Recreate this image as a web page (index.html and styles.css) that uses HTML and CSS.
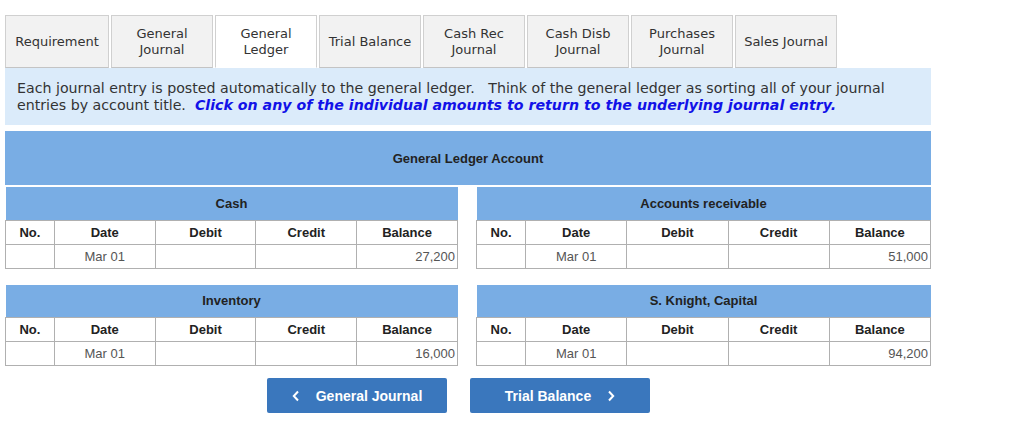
FILE: index.html
```html
<!DOCTYPE html>
<html lang="en">
<head>
    <meta charset="UTF-8">
    <title>General Ledger</title>
    <link rel="stylesheet" href="styles.css">
</head>
<body>
    <div class="page">
        <div class="tabs">
            <div class="tab first">Requirement</div>
            <div class="tab">General<br>Journal</div>
            <div class="tab active">General<br>Ledger</div>
            <div class="tab">Trial Balance</div>
            <div class="tab">Cash Rec<br>Journal</div>
            <div class="tab">Cash Disb<br>Journal</div>
            <div class="tab">Purchases<br>Journal</div>
            <div class="tab">Sales Journal</div>
        </div>

        <div class="info">
            Each journal entry is posted automatically to the general ledger.&nbsp;&nbsp; Think of the general ledger as sorting all of your journal entries by account title.&nbsp;
            <span class="hint">Click on any of the individual amounts to return to the underlying journal entry.</span>
        </div>

        <div class="ledger-title">General Ledger Account</div>

        <div class="accounts">
            <table class="account">
                <tr><th colspan="5" class="acct-name">Cash</th></tr>
                <tr class="cols"><th>No.</th><th>Date</th><th>Debit</th><th>Credit</th><th>Balance</th></tr>
                <tr class="data"><td></td><td class="date">Mar 01</td><td></td><td></td><td class="amt">27,200</td></tr>
            </table>
            <table class="account">
                <tr><th colspan="5" class="acct-name">Accounts receivable</th></tr>
                <tr class="cols"><th>No.</th><th>Date</th><th>Debit</th><th>Credit</th><th>Balance</th></tr>
                <tr class="data"><td></td><td class="date">Mar 01</td><td></td><td></td><td class="amt">51,000</td></tr>
            </table>
            <table class="account">
                <tr><th colspan="5" class="acct-name">Inventory</th></tr>
                <tr class="cols"><th>No.</th><th>Date</th><th>Debit</th><th>Credit</th><th>Balance</th></tr>
                <tr class="data"><td></td><td class="date">Mar 01</td><td></td><td></td><td class="amt">16,000</td></tr>
            </table>
            <table class="account">
                <tr><th colspan="5" class="acct-name">S. Knight, Capital</th></tr>
                <tr class="cols"><th>No.</th><th>Date</th><th>Debit</th><th>Credit</th><th>Balance</th></tr>
                <tr class="data"><td></td><td class="date">Mar 01</td><td></td><td></td><td class="amt">94,200</td></tr>
            </table>
        </div>

        <div class="nav">
            <button class="nav-btn">
                <svg class="chev" width="8" height="12" viewBox="0 0 8 12"><path d="M6 1.5 L1.8 6 L6 10.5" fill="none" stroke="#fff" stroke-width="2"/></svg>
                General Journal
            </button>
            <button class="nav-btn">
                Trial Balance
                <svg class="chev" width="8" height="12" viewBox="0 0 8 12"><path d="M2 1.5 L6.2 6 L2 10.5" fill="none" stroke="#fff" stroke-width="2"/></svg>
            </button>
        </div>
    </div>
</body>
</html>
```

FILE: styles.css
```css
* {
    margin: 0;
    padding: 0;
    box-sizing: border-box;
}

body {
    background: #ffffff;
    font-family: "DejaVu Sans", Verdana, sans-serif;
    color: #333333;
}

.page {
    width: 926px;
    margin-left: 5px;
    padding-top: 15px;
}

.tabs {
    display: flex;
    gap: 2px;
}

.tab {
    width: 102px;
    height: 53px;
    display: flex;
    align-items: center;
    justify-content: center;
    text-align: center;
    background: #f2f2f2;
    border: 1px solid #d0d0d0;
    border-bottom-color: #c4c4c4;
    font-size: 13px;
    line-height: 16px;
    color: #333333;
}

.tab.first {
    width: 104px;
}

.tab.active {
    background: #ffffff;
    border-bottom-color: #ffffff;
}

.info {
    background: #dbebfa;
    height: 57px;
    padding: 12px 12px 0;
    font-size: 14.2px;
    line-height: 17px;
    color: #333333;
}

.hint {
    color: #1212e8;
    font-style: italic;
    font-weight: bold;
}

.ledger-title {
    margin-top: 6px;
    height: 54px;
    background: #79ade4;
    display: flex;
    align-items: center;
    justify-content: center;
    font-family: "Liberation Sans", Arial, sans-serif;
    font-weight: bold;
    font-size: 13px;
    color: #222222;
}

.accounts {
    display: grid;
    grid-template-columns: 453px 455px;
    column-gap: 18px;
    row-gap: 16px;
    margin-top: 2px;
}

.account {
    border-collapse: collapse;
    width: 100%;
    font-family: "Liberation Sans", Arial, sans-serif;
    font-size: 13px;
}

.account th,
.account td {
    border: 1px solid #b0b0b0;
    height: 24px;
    padding: 0 3px;
}

.account .acct-name {
    background: #79ade4;
    border: none;
    height: 33px;
    color: #222222;
}

.cols th {
    width: 101px;
    font-weight: bold;
    color: #222222;
    text-align: center;
}

.cols th:first-child {
    width: 49px;
}

.data td {
    color: #555555;
}

.data .date {
    text-align: center;
}

.data .amt {
    text-align: right;
    padding-right: 2px;
}

.nav {
    display: flex;
    justify-content: center;
    gap: 23px;
    padding-right: 19px;
    margin-top: 12px;
}

.nav-btn {
    width: 180px;
    height: 35px;
    display: flex;
    align-items: center;
    justify-content: center;
    gap: 16px;
    background: #3a77bd;
    color: #ffffff;
    border: none;
    border-radius: 2px;
    font-family: "Liberation Sans", Arial, sans-serif;
    font-weight: bold;
    font-size: 14px;
}
```
